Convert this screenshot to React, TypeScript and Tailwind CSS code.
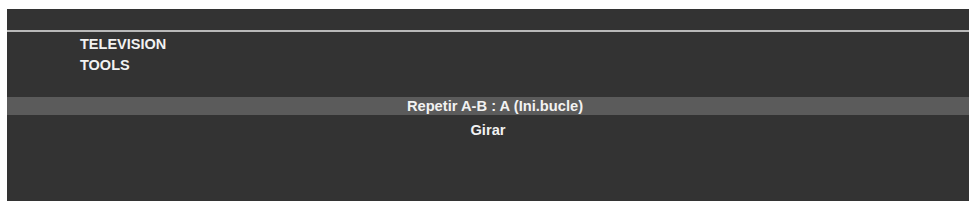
import React from 'react';

const App = () => {
  return (
    <div className="w-[973px] h-[201px] bg-white pt-[9px] pl-[7px] pr-[4px] overflow-hidden font-['Liberation_Sans',Arial,sans-serif]">
      <div className="h-[192px] bg-[#333333] flex flex-col">
        {/* Top bar */}
        <div className="h-[23px] border-b-2 border-[#b9b9b9]" />

        {/* Menu list */}
        <div className="pl-[73px] pt-[2px] flex flex-col text-[14.5px] font-bold text-[#f2f2f2] leading-[21px]">
          <span>TELEVISION</span>
          <span>TOOLS</span>
        </div>

        {/* Options */}
        <div className="mt-[21px] flex flex-col text-[14.7px] font-bold text-[#f2f2f2]">
          <div className="h-[18px] bg-[#5b5b5b] pl-[14px] flex items-center justify-center">
            Repetir A-B : A (Ini.bucle)
          </div>
          <div className="h-[31px] flex items-center justify-center">Girar</div>
        </div>
      </div>
    </div>
  );
};

export default App;
